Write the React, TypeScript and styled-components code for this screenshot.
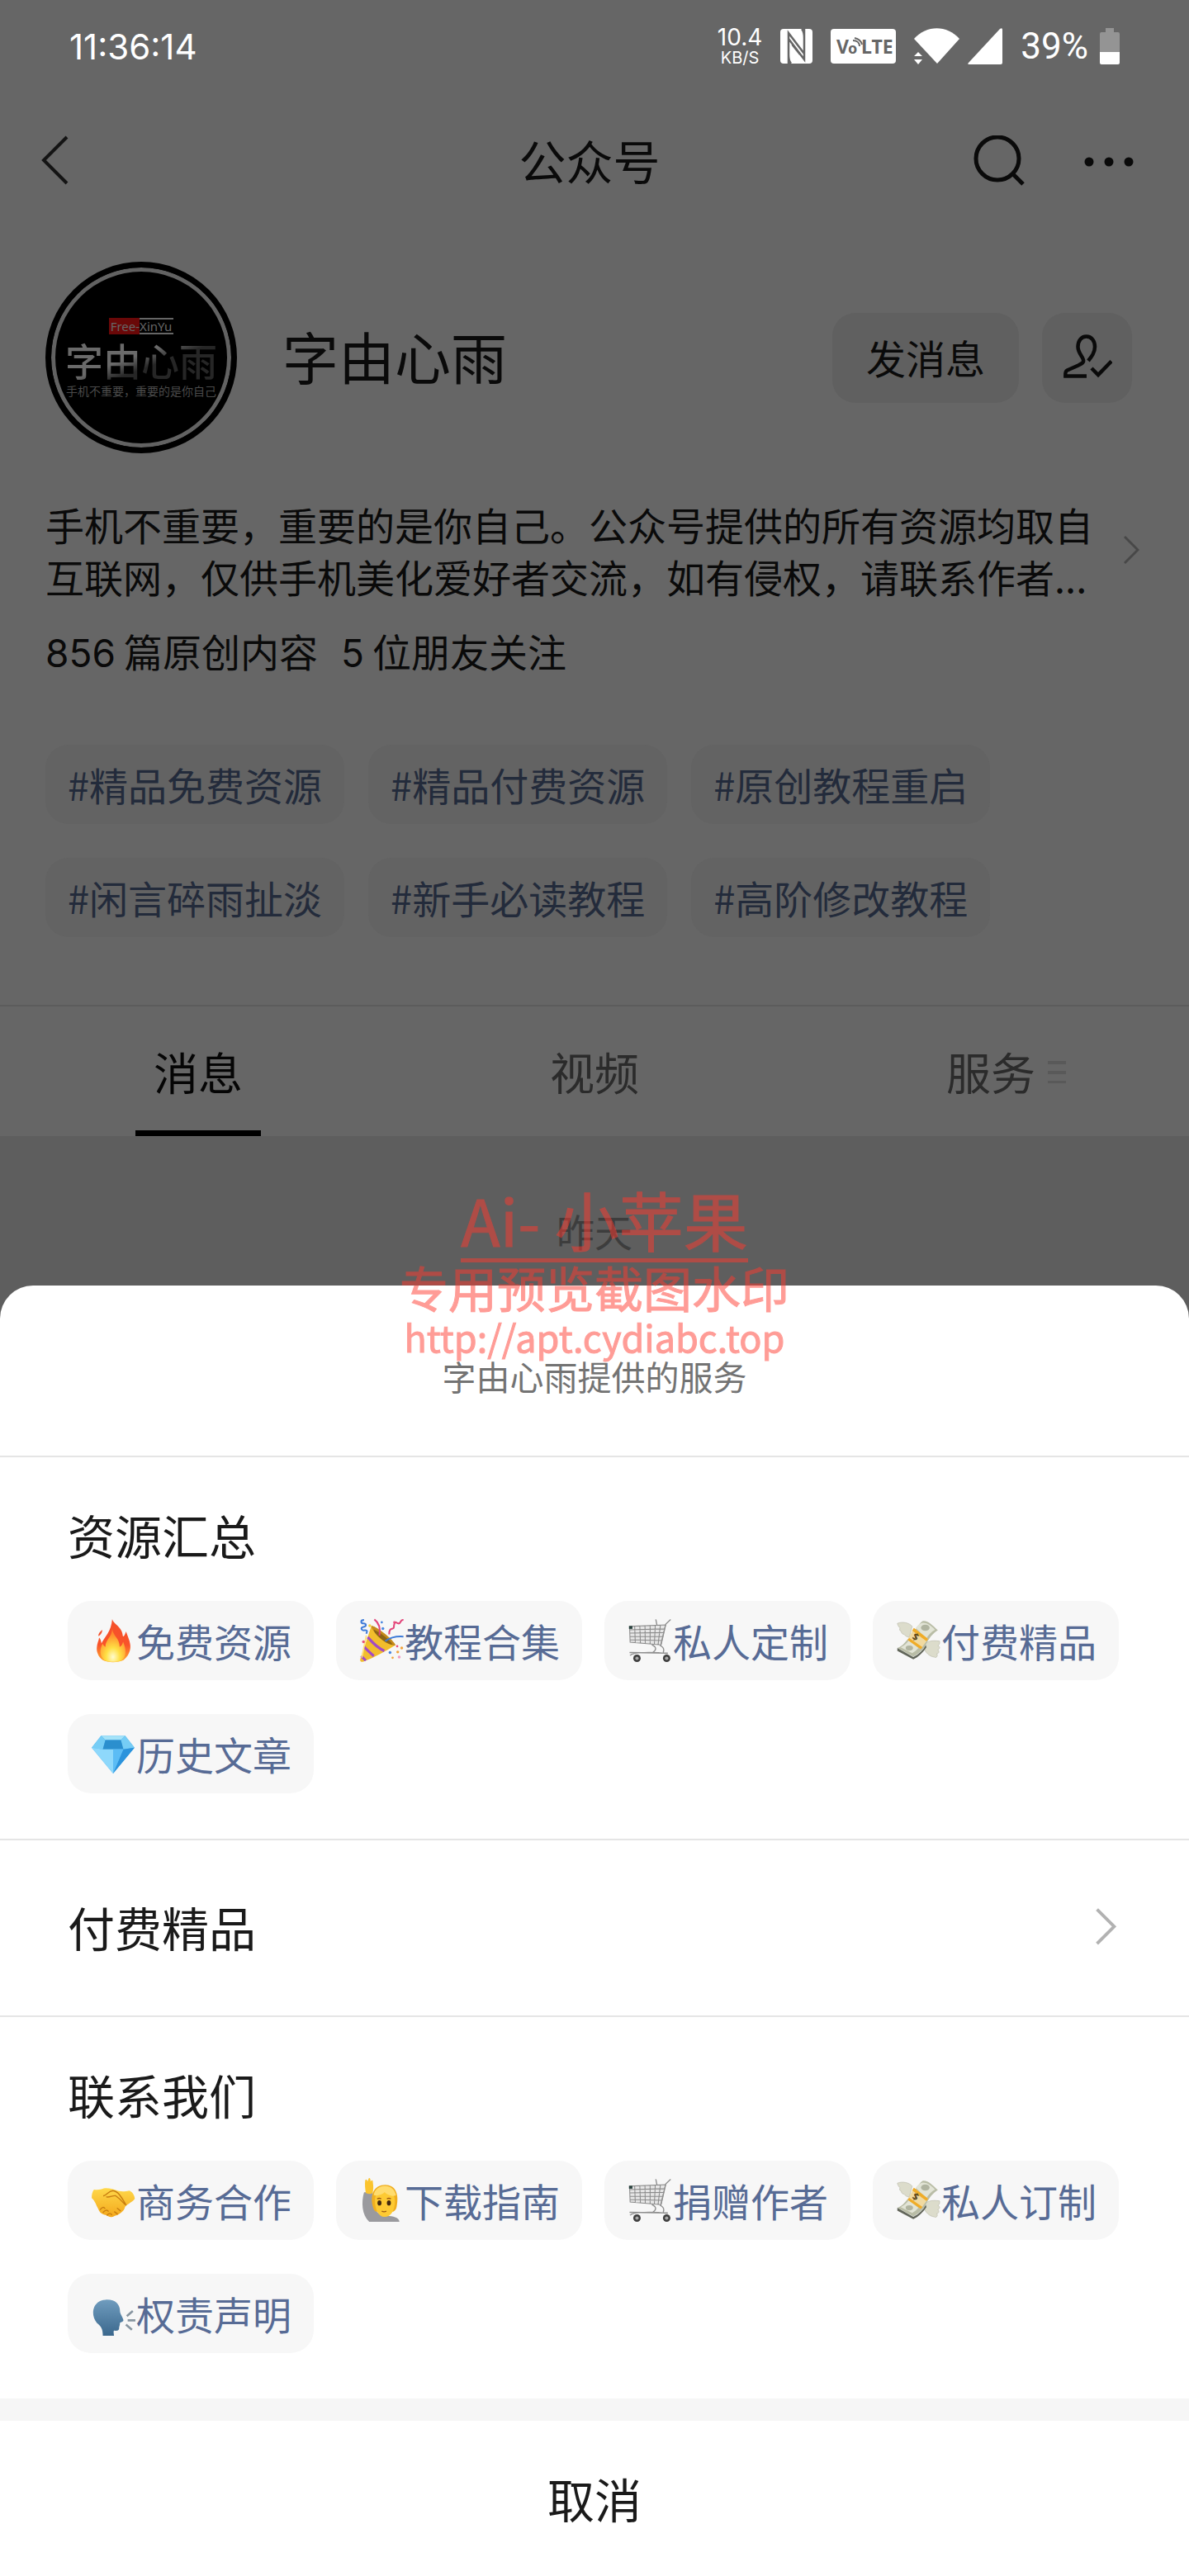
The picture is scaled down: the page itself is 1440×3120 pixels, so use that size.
import React from "react";
import styled, { createGlobalStyle } from "styled-components";

const GlobalStyle = createGlobalStyle`
  * { box-sizing: border-box; }
  body {
    margin: 0;
    background: #5e5e5e;
    font-family: "Noto Sans CJK SC", "Noto Sans", sans-serif;
    color: #0a0a0a;
  }
  button {
    margin: 0;
    padding: 0;
    border: 0;
    background: none;
    color: inherit;
    font: inherit;
    cursor: pointer;
  }
  a { color: inherit; text-decoration: none; }
  h1, h2, p { margin: 0; font-weight: 400; }
  svg { display: block; flex: none; }
`;

const Screen = styled.div`
  position: relative;
  display: flex;
  flex-direction: column;
  min-height: 100vh;
`;

const Backdrop = styled.div`
  background: #666666;
`;

const StatusBar = styled.div`
  display: flex;
  align-items: center;
  justify-content: space-between;
  height: 112px;
  padding: 0 84px;
  font-family: Inter, "Liberation Sans", sans-serif;
  font-size: 42px;
  color: #ffffff;
`;

const StatusIcons = styled.div`
  display: flex;
  align-items: center;
  gap: 22px;
`;

const NetSpeed = styled.div`
  display: flex;
  flex-direction: column;
  align-items: center;
  font-size: 28px;
  line-height: 28px;

  small {
    font-size: 20px;
    line-height: 22px;
  }
`;

const Signal = styled.div`
  display: flex;
  gap: 10px;
`;

const BatteryLevel = styled.div`
  display: flex;
  align-items: center;
  gap: 14px;
  font-family: Roboto, "Liberation Sans", sans-serif;
  font-size: 44px;
`;

const NavBar = styled.nav`
  display: grid;
  grid-template-columns: 1fr auto 1fr;
  align-items: center;
  height: 168px;
  padding: 0 62px 0 50px;
`;

const NavTitle = styled.h1`
  padding-bottom: 6px;
  font-size: 57px;
  line-height: 78px;
`;

const NavActions = styled.div`
  display: flex;
  justify-content: flex-end;
  align-items: center;
  gap: 70px;
`;

const Profile = styled.section`
  display: flex;
  align-items: center;
  gap: 55px;
  padding: 37px 69px 0 55px;
`;

const Avatar = styled.div`
  display: flex;
  flex-direction: column;
  flex: none;
  align-items: center;
  justify-content: center;
  width: 232px;
  height: 232px;
  border: 7px solid #000000;
  border-radius: 50%;
  background: #000000;
  box-shadow: inset 0 0 0 5px #626262;
`;

const AvatarTag = styled.div`
  display: flex;
  font-family: "Noto Sans", sans-serif;
  font-size: 15px;
  line-height: 16px;
  color: #666666;

  b {
    padding: 2px 0 2px 2px;
    background: #6a0808;
    font-weight: 400;
  }
  i {
    padding-right: 2px;
    border: solid #666666;
    border-width: 2px 0;
    font-style: normal;
  }
`;

const AvatarName = styled.div`
  background: linear-gradient(160deg, #6a6a6a 45%, #262626 60%);
  background-clip: text;
  font-size: 46px;
  font-weight: 500;
  line-height: 60px;
  color: transparent;
`;

const AvatarMotto = styled.div`
  font-size: 14px;
  line-height: 16px;
  color: #4a4a4a;
`;

const ProfileName = styled.h2`
  flex: 1;
  padding-bottom: 4px;
  font-size: 68px;
  line-height: 96px;
`;

const ProfileActions = styled.div`
  display: flex;
  gap: 28px;
`;

const ActionButton = styled.button<{ $wide?: boolean }>`
  display: flex;
  align-items: center;
  justify-content: center;
  width: ${(p) => (p.$wide ? 226 : 109)}px;
  height: 109px;
  padding-bottom: 2px;
  border-radius: 28px;
  background: #606060;
  font-size: 48px;
`;

const Bio = styled.a`
  display: flex;
  align-items: center;
  gap: 24px;
  margin-top: 54px;
  padding: 0 60px 0 55px;
  font-size: 47px;
  line-height: 63px;

  p { flex: 1; }
`;

const Stats = styled.div`
  display: flex;
  gap: 28px;
  margin-top: 27px;
  padding: 0 55px;
  font-size: 47px;
  line-height: 63px;
`;

const Stat = styled.span`
  display: flex;
  align-items: baseline;
  gap: 10px;
`;

const Digits = styled.span`
  font-family: Inter, "Liberation Sans", sans-serif;
  font-size: 46px;
  line-height: 46px;
`;

const ChipList = styled.div<{ $inset: number; $gap: number }>`
  display: flex;
  flex-wrap: wrap;
  gap: 41px ${(p) => p.$gap}px;
  padding: 0 ${(p) => p.$inset}px;
`;

const Chip = styled.button<{ $dim?: boolean }>`
  display: flex;
  align-items: center;
  height: 96px;
  padding: 0 27px 2px;
  border-radius: 28px;
  background: ${(p) => (p.$dim ? "#636363" : "#f7f7f7")};
  color: ${(p) => (p.$dim ? "#232b3b" : "#576b95")};
  font-size: 47px;
  line-height: 63px;
`;

const TopicArea = styled.div`
  padding: 83px 0 82px;
`;

const Tabs = styled.div`
  display: grid;
  grid-template-columns: repeat(3, 1fr);
  height: 159px;
  border-top: 2px solid #5c5c5c;
`;

const Tab = styled.button<{ $active?: boolean }>`
  display: flex;
  justify-content: center;
  color: ${(p) => (p.$active ? "#050505" : "#2b2b2b")};
  font-size: 54px;

  span {
    position: relative;
    display: flex;
    align-items: center;
    justify-content: center;
    width: 152px;
    height: 157px;
    box-shadow: ${(p) => (p.$active ? "inset 0 -7px #000000" : "none")};
  }
  svg {
    position: absolute;
    left: 100%;
    top: 66px;
    margin-left: -7px;
  }
`;

const Feed = styled.div`
  padding: 84px 0 37px;
  font-size: 46px;
  line-height: 60px;
  text-align: center;
  color: #3d3d3d;
`;

const Sheet = styled.section`
  display: flex;
  flex: 1;
  flex-direction: column;
  border-radius: 40px 40px 0 0;
  background: #ffffff;
  color: #1a1a1a;
`;

const SheetTitle = styled.p`
  padding: 79px 0 67px;
  border-bottom: 2px solid #e5e5e5;
  font-size: 41px;
  line-height: 60px;
  text-align: center;
  color: #737373;
`;

const Group = styled.div<{ $ruled?: boolean }>`
  padding: 54px 0 55px;
  border-bottom: ${(p) => (p.$ruled ? "2px solid #e5e5e5" : "0")};
`;

const GroupTitle = styled.h2`
  padding: 0 82px;
  margin-bottom: 42px;
  font-size: 57px;
  line-height: 78px;
`;

const ServiceLink = styled.a`
  display: flex;
  align-items: center;
  justify-content: space-between;
  height: 214px;
  padding: 0 88px 4px 82px;
  border-bottom: 2px solid #e5e5e5;
  font-size: 57px;
`;

const Cancel = styled.button`
  flex: 1;
  min-height: 188px;
  padding-bottom: 2px;
  border-top: 27px solid #f6f6f6;
  font-size: 57px;
`;

const Watermark = styled.div`
  position: absolute;
  top: 1428px;
  left: 0;
  right: 0;
  display: flex;
  flex-direction: column;
  align-items: center;
  pointer-events: none;
  color: #ff3b30;
  opacity: 0.5;
  -webkit-text-stroke: 1px #ff3b30;
`;

const WatermarkName = styled.div`
  padding-left: 24px;
  font-size: 78px;
  line-height: 96px;

  span {
    display: block;
    border-bottom: 5px solid #ff3b30;
  }
`;

const WatermarkNote = styled.div`
  font-size: 59px;
  line-height: 60px;
`;

const WatermarkUrl = styled.div`
  font-size: 45px;
  line-height: 60px;
`;

/* ---------- icons ---------- */

const BackIcon = () => (
  <svg width="33" height="60" viewBox="0 0 33 60" fill="none" stroke="#141414" strokeWidth="4">
    <path d="M31 2 3 30l28 28" />
  </svg>
);

const SearchIcon = () => (
  <svg width="64" height="64" viewBox="0 0 64 64" fill="none" stroke="#0a0a0a" strokeWidth="5">
    <circle cx="30" cy="28" r="26" />
    <path d="m48 46 13 13" />
  </svg>
);

const MoreIcon = () => (
  <svg width="66" height="12" viewBox="0 0 66 12" fill="#0a0a0a">
    <circle cx="7" cy="6" r="5.5" />
    <circle cx="31" cy="6" r="5.5" />
    <circle cx="55" cy="6" r="5.5" />
  </svg>
);

const FollowedIcon = () => (
  <svg width="60" height="54" viewBox="0 0 60 54" fill="none" stroke="#0a0a0a" strokeWidth="4.5">
    <path d="M31 32c4-5 8-10 8-17 0-7-4-12.500-10.300-12.500S18.500 8 18.500 15c0 9 8 13 6.500 18-.6 2-3 3-6 4.500L5.500 43.500C3.500 44.500 3 46 3.300 50.500H29" />
    <path d="m35 41 8 8 16-16.500" />
  </svg>
);

const Chevron = ({ width, color }: { width: number; color: string }) => (
  <svg width={width} height={width * 1.8} viewBox="0 0 20 36" fill="none" stroke={color} strokeWidth="3">
    <path d="m2 2 16 16L2 34" />
  </svg>
);

const NfcIcon = () => (
  <svg width="39" height="42" viewBox="0 0 39 42">
    <rect width="39" height="42" rx="4" fill="#fff" />
    <path d="M10 42V5l19 25V11c0-6-1-9-3-11M29 0v37L10 12v19c0 6 1 9 3 11M14.500 19 24 31" fill="none" stroke="#666" strokeWidth="2.500" />
  </svg>
);

const VolteIcon = () => (
  <svg width="79" height="42" viewBox="0 0 79 42">
    <rect width="79" height="42" rx="4" fill="#fff" />
    <g fill="#666" fontFamily="Noto Sans" fontWeight="700">
      <text x="7" y="30" fontSize="23">V</text>
      <text x="21" y="30" fontSize="18">o</text>
      <text x="37" y="30" fontSize="23">LTE</text>
    </g>
    <path d="M27 14c5 0 8 3 8 7M29 11c5 1 8 4 9 8" fill="none" stroke="#666" strokeWidth="2" />
  </svg>
);

const WifiIcon = () => (
  <svg width="55" height="44" viewBox="0 0 55 44" fill="#fff">
    <path d="M0 13C15-4 40-4 55 13L28 43z" />
    <path d="m5 29 5 5H0zM0 38h10l-5 6z" />
  </svg>
);

const CellIcon = () => (
  <svg width="42" height="44" viewBox="0 0 42 44" fill="#fff">
    <path d="M39 1q3-2 3 1v40q0 2-2 2H2q-3 0-1-2z" />
  </svg>
);

const BatteryIcon = () => (
  <svg width="24" height="44" viewBox="0 0 24 44">
    <path d="M7 0h10v5h5q2 0 2 2v22H0V7q0-2 2-2h5z" fill="#949494" />
    <path d="M0 29h24v13q0 2-2 2H2q-2 0-2-2z" fill="#fff" />
  </svg>
);

const MenuLinesIcon = () => (
  <svg width="22" height="27" viewBox="0 0 22 27" fill="#595959">
    <path d="M0 0h22v4H0zM0 12h22v4H0zM0 24h22v3H0z" />
  </svg>
);

const emojiBox = { width: 56, height: 56 };

const FireEmoji = () => (
  <svg {...emojiBox} viewBox="30 66 162 162">
    <defs>
      <linearGradient id="fire" x1="0" y1="0" x2="0" y2="1">
        <stop offset="0" stopColor="#f4502a" />
        <stop offset=".6" stopColor="#f9532a" />
        <stop offset="1" stopColor="#ffb02e" />
      </linearGradient>
      <radialGradient id="flame" cx=".5" cy=".85" r=".7">
        <stop offset="0" stopColor="#fffbd0" />
        <stop offset=".4" stopColor="#ffe044" />
        <stop offset="1" stopColor="#ff8a2c" />
      </radialGradient>
    </defs>
    <path d="M108 74c2 18 35 26 37 60 2 5 8-4 11-16 8 22 20 45 14 66-3 12-10 24-22 34-20 10-55 10-74 0-15-10-22-30-20-44 1-14 6-22 8-34 5 4 7 12 8 20 12-24 34-40 38-86z" fill="url(#fire)" />
    <path d="M108 110c2 22 26 32 26 62 6-2 10-10 12-18 10 22 14 52-6 66-18 6-42 6-58 0-20-16-18-40-8-60 2 6 6 10 10 12 0-26 22-34 24-62z" fill="url(#flame)" />
    <path d="M73 112c-8 6-14 14-14 22 6-2 14-10 14-22z" fill="#f4502a" />
  </svg>
);

const PartyEmoji = () => (
  <svg {...emojiBox} viewBox="1004 66 162 162">
    <path d="M1050 98c26 10 64 38 84 68-34 22-72 42-112 58-8 2-14-2-11-10z" fill="#f2bd2c" />
    <path d="M1050 98c20 4 76 48 84 68-10 12-90-48-84-68z" fill="#c58a1c" />
    <path d="M1058 112c16 4 56 34 66 52-18 2-66-36-66-52z" fill="#8c6416" />
    <path d="M1037 138c14 16 30 36 58 48M1024 172c10 10 20 20 34 32M1014 204l16 16" fill="none" stroke="#a24bc4" strokeWidth="9" />
    <path d="M1032 132l-16 78" stroke="#ffe27a" strokeWidth="5" />
    <path d="M1060 76c14 10 22 30 18 56M1162 78c-12-4-8 14-18 12s-10-10-14 2 2 14-6 16-12 4-12 20" fill="none" stroke="#e2457a" strokeWidth="6" />
    <path d="M1098 152c20-14 40-18 64-16M1024 78c-14 0-12 12-2 12s12 10 0 12-8 14 4 12 8 6 6 12" fill="none" stroke="#3e7bd8" strokeWidth="6" />
    <g fill="#4a86e0"><circle cx="1090" cy="108" r="5" /><circle cx="1115" cy="192" r="5" /><circle cx="1086" cy="86" r="4" /></g>
    <g fill="#e8507e"><circle cx="1022" cy="154" r="5" /><circle cx="1130" cy="86" r="4" /><circle cx="1147" cy="208" r="5" fill="#f29ac0" /><circle cx="1140" cy="170" r="4" /></g>
    <g fill="#f2a33c"><circle cx="1142" cy="190" r="5" /><circle cx="1156" cy="176" r="5" /><circle cx="1124" cy="210" r="4" /><circle cx="1044" cy="98" r="5" fill="#f5cf3c" /></g>
  </svg>
);

const CartEmoji = () => (
  <svg {...emojiBox} viewBox="30 66 162 162" fill="none">
    <path d="M40 100 166 95 150 165 42 156z" fill="#e6e6e6" />
    <path d="M40 100 166 95 150 165 42 156zM40 112l123-3M40 124l121-2M41 136l117 0M41 147l114 3M58 100l2 57M76 99l2 60M94 98l1 62M112 97v65M130 97l-3 65M148 96l-8 68" stroke="#8a8a8a" strokeWidth="3" />
    <path d="M184 76l-17 16-17 73M132 76l4 20M118 165c18 8 16 18 4 26M146 166c14 8 16 14 12 26M42 202c8-12 82-12 132-6M40 192l134 2" stroke="#8f8f8f" strokeWidth="4" />
    <rect x="38" y="99" width="12" height="10" fill="#27403c" />
    <g fill="#3d3d3d"><circle cx="66" cy="212" r="13" /><circle cx="170" cy="212" r="13" /></g>
    <g fill="#a8a8a8"><circle cx="66" cy="212" r="6" /><circle cx="170" cy="212" r="6" /></g>
  </svg>
);

const MoneyEmoji = () => (
  <svg {...emojiBox} viewBox="1004 66 162 162">
    <path d="M1064 100c-10-12-34-18-52-10 2 8 6 14 10 16-4 4-2 10 4 12 0 6 4 10 10 10 4 6 10 10 18 10zM1104 172c8-20 26-24 56-20 2 8-2 14-6 16 10 4 6 12 0 14 6 6 4 14-4 14 6 8-2 16-8 12-16-2-34-16-38-36z" fill="#dcdccb" stroke="#bdbdae" strokeWidth="2" />
    <path d="M1012 176c20-8 34-26 48-48 18-16 28-38 40-46 18-4 34 14 54 32-18 10-32 30-42 50-14 24-30 34-44 42-20-10-36-20-56-30z" fill="#b9bda6" />
    <path d="M1012 176l56 32v8l-56-30zM1068 208c20-10 34-24 44-42l2 8c-12 18-28 34-46 42z" fill="#62665a" />
    <path d="M1076 106c10-12 18-18 26-18 14 0 28 10 42 24-14 6-22 18-30 30zM1024 174c12-6 20-14 28-24l34 26c-8 8-14 14-22 18z" fill="#e2e4d6" />
    <ellipse cx="1110" cy="105" rx="15" ry="11" fill="#b0b4a0" />
    <ellipse cx="1054" cy="176" rx="13" ry="9" fill="#b0b4a0" />
    <path d="M1070 106l50 38-26 36-46-32z" fill="#f0d9a0" />
    <path d="M1070 106l50 38-6 8-50-37zM1054 141l46 32-6 7-46-32z" fill="#efac28" />
    <text x="1066" y="152" fontSize="34" fontWeight="700" fontFamily="Noto Sans" fill="#5b4417" transform="rotate(30 1082 140)">$</text>
  </svg>
);

const GemEmoji = () => (
  <svg {...emojiBox} viewBox="0 0 54 54">
    <path d="M13 7h28l11 14-25 30L2 21z" fill="#45aef0" />
    <path d="M13 7h28l-5 5H18z" fill="#a5e3f8" />
    <path d="M2 21 13 7l5 5-3 11zM52 21 41 7l-5 5 3 11z" fill="#76cdf5" />
    <path d="M18 12h18l3 11H15z" fill="#2b8fce" />
    <path d="m2 21 13 2 12 28zM15 23h24L27 51z" fill="#8ed8fb" />
    <path d="M27 23h12L27 51z" fill="#5bbcf5" />
    <path d="m52 21-13 2-12 28z" fill="#2b93dc" />
  </svg>
);

const HandshakeEmoji = () => (
  <svg {...emojiBox} viewBox="30 66 162 162">
    <defs>
      <linearGradient id="skin" x1="0" y1="0" x2="0" y2="1">
        <stop offset="0" stopColor="#ffd84a" />
        <stop offset="1" stopColor="#f3a81c" />
      </linearGradient>
    </defs>
    <path d="M44 112c14 2 24 0 34-4 18-2 30 2 42 6 14 4 22 8 48 2 10 4 18 16 19 28-8 12-22 16-34 28-4 18-22 28-36 32-14 8-20 4-30-2-16-4-22-8-28-22-8-14-10-26-23-38 0-14 2-22 8-30z" fill="url(#skin)" />
    <path d="M78 134c10-2 16-16 32-18 20 2 32 26 46 50M88 138c12 2 22-6 32-4 12 8 22 18 32 30M66 182c6-8 12-10 16-4M76 192c6-8 14-10 18-4M90 202c6-8 12-8 16-2M116 190l10 8M126 178l10 8" fill="none" stroke="#c87d10" strokeWidth="4" strokeLinecap="round" />
  </svg>
);

const RaisedHandEmoji = () => (
  <svg {...emojiBox} viewBox="1004 66 162 162">
    <path d="M1024 122c-10 34-8 80 18 103h106c-2-16-24-20-42-20-26 0-48-16-50-44-2-14 0-28-2-41z" fill="#9a9a9e" />
    <path d="M1030 124c-2-14-4-28-2-44 4-6 6-2 8 4l5-12c6-2 5 6 6 12 6-8 8-4 8 4 2 14 2 24-1 36-8 6-16 4-24 0z" fill="#fbc42d" />
    <path d="M1056 176c-14-46 4-80 42-80 36 0 50 32 40 78-2 10-8 14-12 16l-60 0c-6-4-8-8-10-14z" fill="#f0ae1f" />
    <path d="M1062 150c0-20 10-28 34-28s36 8 36 30c0 34-14 56-36 56s-34-26-34-58z" fill="#fdca33" />
    <path d="M1058 132c4-40 68-48 78 0-12 6-30 0-40-10-8 8-26 14-38 10z" fill="#ffdc6e" />
    <g fill="#42290f"><ellipse cx="1078" cy="159" rx="7" ry="9" /><ellipse cx="1111" cy="159" rx="7" ry="9" /></g>
    <path d="M1070 145q7-5 14 0M1104 145q7-5 14 0M1086 188q8 4 16 0" stroke="#9c5a12" strokeWidth="4" fill="none" />
  </svg>
);

const SpeakingEmoji = () => (
  <svg {...emojiBox} viewBox="0 0 54 54">
    <defs>
      <linearGradient id="head" x1="0" y1="0" x2="0" y2="1">
        <stop offset="0" stopColor="#6f9cbe" />
        <stop offset="1" stopColor="#3a678c" />
      </linearGradient>
    </defs>
    <path d="M15 54c0-8-2-11-7-15C0 29 3 13 18 12c14-1 17 8 17 13 0 4 4 8 4 11 0 2-3 2-4 3 0 3-1 4-1 6 0 4-5 3-6 3-1 2 0 4 0 6-4 1-9 1-13 0z" fill="url(#head)" />
    <path d="m43 31 7-6M44 36h9M42 41l7 6" stroke="#8795a0" strokeWidth="2.500" />
  </svg>
);

/* ---------- data ---------- */

const topics = ["#精品免费资源", "#精品付费资源", "#原创教程重启", "#闲言碎雨扯淡", "#新手必读教程", "#高阶修改教程"];

type Service = { icon: React.FC; label: string };

const resources: Service[] = [
  { icon: FireEmoji, label: "免费资源" },
  { icon: PartyEmoji, label: "教程合集" },
  { icon: CartEmoji, label: "私人定制" },
  { icon: MoneyEmoji, label: "付费精品" },
  { icon: GemEmoji, label: "历史文章" },
];

const contacts: Service[] = [
  { icon: HandshakeEmoji, label: "商务合作" },
  { icon: RaisedHandEmoji, label: "下载指南" },
  { icon: CartEmoji, label: "捐赠作者" },
  { icon: MoneyEmoji, label: "私人订制" },
  { icon: SpeakingEmoji, label: "权责声明" },
];

const ServiceGroup = ({ title, items, ruled }: { title: string; items: Service[]; ruled?: boolean }) => (
  <Group $ruled={ruled}>
    <GroupTitle>{title}</GroupTitle>
    <ChipList $inset={82} $gap={27}>
      {items.map(({ icon: Icon, label }) => (
        <Chip key={label}>
          <Icon />
          {label}
        </Chip>
      ))}
    </ChipList>
  </Group>
);

export default function App() {
  return (
    <Screen>
      <GlobalStyle />
      <Backdrop>
        <StatusBar>
          <span>11:36:14</span>
          <StatusIcons>
            <NetSpeed>
              10.4
              <small>KB/S</small>
            </NetSpeed>
            <NfcIcon />
            <VolteIcon />
            <Signal>
              <WifiIcon />
              <CellIcon />
            </Signal>
            <BatteryLevel>
              39%
              <BatteryIcon />
            </BatteryLevel>
          </StatusIcons>
        </StatusBar>

        <NavBar>
          <div>
            <button aria-label="返回">
              <BackIcon />
            </button>
          </div>
          <NavTitle>公众号</NavTitle>
          <NavActions>
            <button aria-label="搜索">
              <SearchIcon />
            </button>
            <button aria-label="更多">
              <MoreIcon />
            </button>
          </NavActions>
        </NavBar>

        <Profile>
          <Avatar>
            <AvatarTag>
              <b>Free-</b>
              <i>XinYu</i>
            </AvatarTag>
            <AvatarName>字由心雨</AvatarName>
            <AvatarMotto>手机不重要，重要的是你自己</AvatarMotto>
          </Avatar>
          <ProfileName>字由心雨</ProfileName>
          <ProfileActions>
            <ActionButton $wide>发消息</ActionButton>
            <ActionButton aria-label="已关注">
              <FollowedIcon />
            </ActionButton>
          </ProfileActions>
        </Profile>

        <Bio href="#bio">
          <p>
            手机不重要，重要的是你自己。公众号提供的所有资源均取自互联网，仅供手机美化爱好者交流，如有侵权，请联系作者...
          </p>
          <Chevron width={20} color="#484848" />
        </Bio>

        <Stats>
          <Stat>
            <Digits>856</Digits>篇原创内容
          </Stat>
          <Stat>
            <Digits>5</Digits>位朋友关注
          </Stat>
        </Stats>

        <TopicArea>
          <ChipList $inset={55} $gap={29}>
            {topics.map((t) => (
              <Chip key={t} $dim>
                {t}
              </Chip>
            ))}
          </ChipList>
        </TopicArea>

        <Tabs>
          <Tab $active>
            <span>消息</span>
          </Tab>
          <Tab>
            <span>视频</span>
          </Tab>
          <Tab>
            <span>
              服务
              <MenuLinesIcon />
            </span>
          </Tab>
        </Tabs>
      </Backdrop>

      <Feed>昨天</Feed>

      <Sheet>
        <SheetTitle>字由心雨提供的服务</SheetTitle>
        <ServiceGroup title="资源汇总" items={resources} ruled />
        <ServiceLink href="#premium">
          付费精品
          <Chevron width={26} color="#b2b2b2" />
        </ServiceLink>
        <ServiceGroup title="联系我们" items={contacts} />
        <Cancel>取消</Cancel>
      </Sheet>

      <Watermark>
        <WatermarkName>
          <span>Ai- 小苹果</span>
        </WatermarkName>
        <WatermarkNote>专用预览截图水印</WatermarkNote>
        <WatermarkUrl>http://apt.cydiabc.top</WatermarkUrl>
      </Watermark>
    </Screen>
  );
}
